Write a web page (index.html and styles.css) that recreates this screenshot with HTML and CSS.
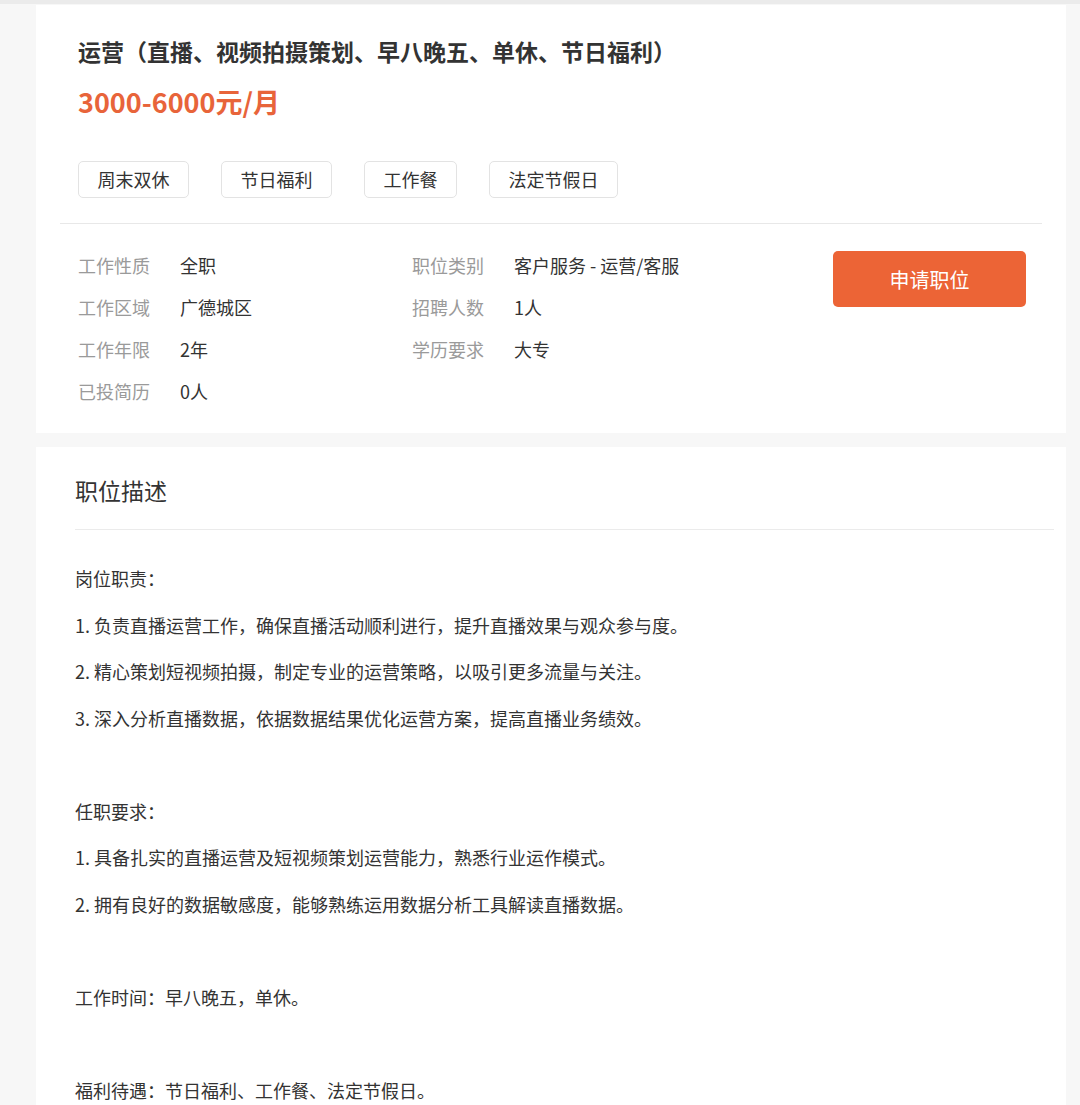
FILE: index.html
```html
<!DOCTYPE html>
<html>
<head>
<meta charset="utf-8">
<title>职位详情</title>
<link rel="stylesheet" href="styles.css">
</head>
<body>
<div class="page">
  <div class="card job-card">
    <div class="job-head">
      <h1 class="job-title">运营（直播、视频拍摄策划、早八晚五、单休、节日福利）</h1>
      <div class="job-salary">3000-6000元/月</div>
      <div class="tags">
        <span class="tag">周末双休</span>
        <span class="tag">节日福利</span>
        <span class="tag">工作餐</span>
        <span class="tag">法定节假日</span>
      </div>
    </div>

    <div class="job-info">
      <div class="info-grid">
        <div class="info-item"><span class="info-label">工作性质</span><span class="info-value">全职</span></div>
        <div class="info-item"><span class="info-label">职位类别</span><span class="info-value">客户服务 - 运营/客服</span></div>
        <div class="info-item"><span class="info-label">工作区域</span><span class="info-value">广德城区</span></div>
        <div class="info-item"><span class="info-label">招聘人数</span><span class="info-value">1人</span></div>
        <div class="info-item"><span class="info-label">工作年限</span><span class="info-value">2年</span></div>
        <div class="info-item"><span class="info-label">学历要求</span><span class="info-value">大专</span></div>
        <div class="info-item"><span class="info-label">已投简历</span><span class="info-value">0人</span></div>
      </div>
      <button class="apply-btn" type="button">申请职位</button>
    </div>
  </div>

  <div class="card desc-card">
    <h2 class="desc-title">职位描述</h2>
    <div class="desc-body">
      <p>岗位职责：</p>
      <p>1. 负责直播运营工作，确保直播活动顺利进行，提升直播效果与观众参与度。</p>
      <p>2. 精心策划短视频拍摄，制定专业的运营策略，以吸引更多流量与关注。</p>
      <p>3. 深入分析直播数据，依据数据结果优化运营方案，提高直播业务绩效。</p>
      <p><br></p>
      <p>任职要求：</p>
      <p>1. 具备扎实的直播运营及短视频策划运营能力，熟悉行业运作模式。</p>
      <p>2. 拥有良好的数据敏感度，能够熟练运用数据分析工具解读直播数据。</p>
      <p><br></p>
      <p>工作时间：早八晚五，单休。</p>
      <p><br></p>
      <p>福利待遇：节日福利、工作餐、法定节假日。</p>
    </div>
  </div>
</div>
</body>
</html>
```

FILE: styles.css
```css
body {
  margin: 0;
  background: #f7f7f7;
  font-family: "Noto Sans CJK SC", "Microsoft YaHei", sans-serif;
  color: #333;
}

.page {
  border-top: 4px solid #ebebeb;
  padding: 1px 14px 0 36px;
}

.card {
  background: #fff;
}

/* top card */
.job-card {
  padding: 30px 24px 21px;
}

.job-head {
  padding: 0 18px 25px;
  border-bottom: 1px solid #e8e8e8;
}

.job-title {
  margin: 0;
  font-size: 23px;
  line-height: 32px;
  font-weight: bold;
  color: #333;
}

.job-salary {
  margin-top: 17px;
  font-size: 27px;
  line-height: 36px;
  font-weight: bold;
  color: #e8643a;
}

.tags {
  display: flex;
  gap: 32px;
  margin-top: 41px;
}

.tag {
  padding: 0 18.5px;
  height: 35px;
  line-height: 35px;
  font-size: 18px;
  border: 1px solid #e3e3e3;
  border-radius: 5px;
  color: #333;
}

.job-info {
  display: flex;
  align-items: flex-start;
  padding: 20px 16px 0 18px;
}

.info-grid {
  display: grid;
  grid-template-columns: 334px 334px;
}

.info-item {
  display: flex;
  font-size: 18px;
  line-height: 42px;
}

.info-label {
  width: 102px;
  color: #9a9a9a;
}

.info-value {
  color: #333;
}

.apply-btn {
  margin-left: auto;
  margin-top: 7px;
  width: 193px;
  height: 56px;
  border: none;
  border-radius: 5px;
  background: #ec6436;
  color: #fff;
  font-family: inherit;
  font-size: 20px;
  cursor: pointer;
}

/* description card */
.desc-card {
  margin-top: 14px;
  padding: 24px 12px 0 39px;
  min-height: 700px;
}

.desc-title {
  margin: 0;
  font-size: 23px;
  line-height: 38px;
  font-weight: normal;
  color: #333;
  padding-bottom: 20px;
  border-bottom: 1px solid #ebebeb;
}

.desc-body {
  padding-top: 25px;
}

.desc-body p {
  margin: 0;
  font-size: 18px;
  line-height: 46.5px;
  color: #333;
}
```
